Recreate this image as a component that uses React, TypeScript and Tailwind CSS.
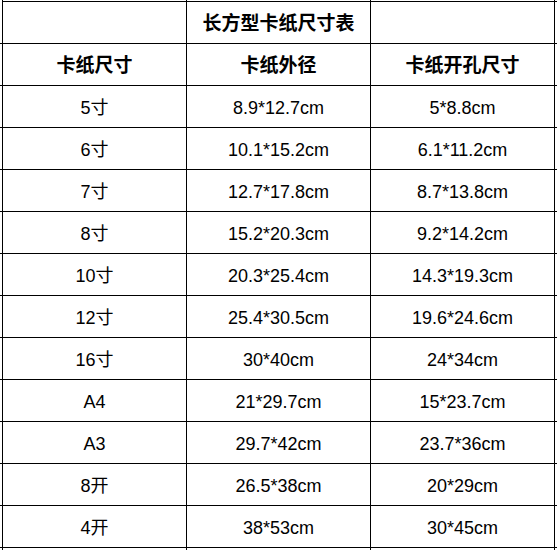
import React from "react";

const rows: [string, string, string][] = [
  ["5寸", "8.9*12.7cm", "5*8.8cm"],
  ["6寸", "10.1*15.2cm", "6.1*11.2cm"],
  ["7寸", "12.7*17.8cm", "8.7*13.8cm"],
  ["8寸", "15.2*20.3cm", "9.2*14.2cm"],
  ["10寸", "20.3*25.4cm", "14.3*19.3cm"],
  ["12寸", "25.4*30.5cm", "19.6*24.6cm"],
  ["16寸", "30*40cm", "24*34cm"],
  ["A4", "21*29.7cm", "15*23.7cm"],
  ["A3", "29.7*42cm", "23.7*36cm"],
  ["8开", "26.5*38cm", "20*29cm"],
  ["4开", "38*53cm", "30*45cm"],
];

function Row({ cells, bold }: { cells: [string, string, string]; bold?: boolean }) {
  return (
    <>
      <div className="h-[42px] border-b border-r border-black" />
      {cells.map((c, i) => (
        <div
          key={i}
          className={`h-[42px] border-b border-r border-black flex items-center justify-center pt-[3px] text-black ${
            bold ? "font-bold text-[19px]" : "text-[18px]"
          }`}
        >
          {c}
        </div>
      ))}
      <div className="h-[42px] border-b border-black" />
    </>
  );
}

export default function App() {
  return (
    <div
      className="w-[557px] h-[550px] bg-white overflow-hidden"
      style={{ fontFamily: '"Liberation Sans", "Noto Sans CJK SC", sans-serif' }}
    >
      <div className="grid grid-cols-[3px_184px_184px_184px_2px]">
        <div className="h-[2px] border-r border-black" />
        <div className="h-[2px] border-b border-r border-black" />
        <div className="h-[2px] border-b border-r border-black" />
        <div className="h-[2px] border-b border-r border-black" />
        <div className="h-[2px] border-b border-black" />
        <Row cells={["", "长方型卡纸尺寸表", ""]} bold />
        <Row cells={["卡纸尺寸", "卡纸外径", "卡纸开孔尺寸"]} bold />
        {rows.map((r, i) => (
          <Row key={i} cells={r} />
        ))}
        <div className="h-[3px] border-r border-black" />
        <div className="h-[3px] border-r border-black" />
        <div className="h-[3px] border-r border-black" />
        <div className="h-[3px] border-r border-black" />
        <div className="h-[3px]" />
      </div>
    </div>
  );
}
